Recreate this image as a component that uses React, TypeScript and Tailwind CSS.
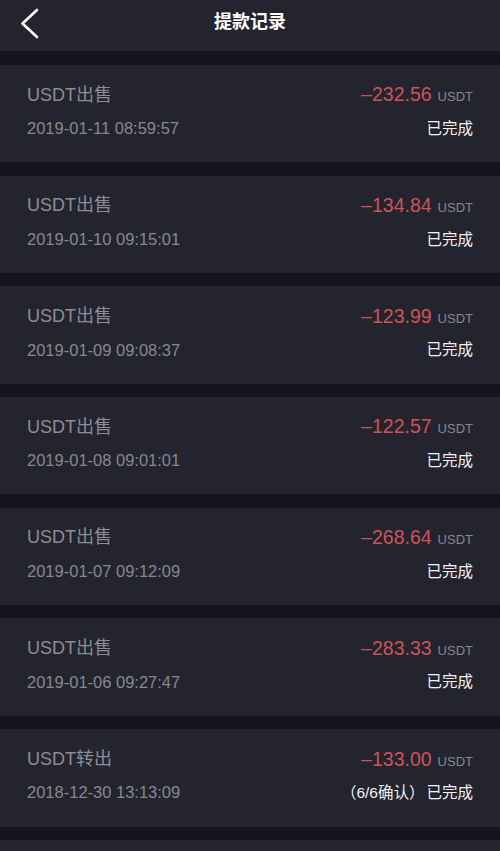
import React from "react";

type Item = { title: string; date: string; amount: string; status: string; prefix?: string };

const items: Item[] = [
  { title: "USDT出售", date: "2019-01-11 08:59:57", amount: "232.56", status: "已完成" },
  { title: "USDT出售", date: "2019-01-10 09:15:01", amount: "134.84", status: "已完成" },
  { title: "USDT出售", date: "2019-01-09 09:08:37", amount: "123.99", status: "已完成" },
  { title: "USDT出售", date: "2019-01-08 09:01:01", amount: "122.57", status: "已完成" },
  { title: "USDT出售", date: "2019-01-07 09:12:09", amount: "268.64", status: "已完成" },
  { title: "USDT出售", date: "2019-01-06 09:27:47", amount: "283.33", status: "已完成" },
  { title: "USDT转出", date: "2018-12-30 13:13:09", amount: "133.00", status: "已完成", prefix: "（6/6确认）" },
];

const font = { fontFamily: '"Liberation Sans", "Noto Sans CJK SC", sans-serif' };

export default function App() {
  return (
    <div className="w-[500px] h-[851px] overflow-hidden bg-[#14151d]" style={font}>
      <div className="relative h-[51px] bg-[#23242e] flex items-center justify-center">
        <svg className="absolute left-[18px] top-[8px]" width="24" height="32" viewBox="0 0 24 32">
          <polyline points="19,2 4.5,15.5 19,29" fill="none" stroke="#ffffff" strokeWidth="2.6" strokeLinecap="round" strokeLinejoin="round" />
        </svg>
        <span className="text-white text-[18px] font-semibold -mt-[6px]">提款记录</span>
      </div>
      <div className="flex flex-col gap-[13.3px] pt-[14px]">
        {items.map((it, i) => (
          <div key={i} className="h-[97.4px] shrink-0 bg-[#23242e] px-[27px] pt-[18px]">
            <div className="h-[24px] flex items-center justify-between">
              <span className="text-[18px] text-[#8c8d96]">{it.title}</span>
              <span className="flex items-baseline">
                <span className="text-[19.5px] text-[#cd535b]">–{it.amount}</span>
                <span className="ml-[6px] text-[13px] text-[#878891]">USDT</span>
              </span>
            </div>
            <div className="mt-[10px] h-[23px] flex items-center justify-between">
              <span className="text-[16.5px] text-[#878891]">{it.date}</span>
              <span className="text-[15.5px] text-[#f2f2f4]">
                {it.prefix ? <span className="mr-[2px]">{it.prefix}</span> : null}
                {it.status}
              </span>
            </div>
          </div>
        ))}
        <div className="h-[97.4px] shrink-0 bg-[#23242e]" />
      </div>
    </div>
  );
}
